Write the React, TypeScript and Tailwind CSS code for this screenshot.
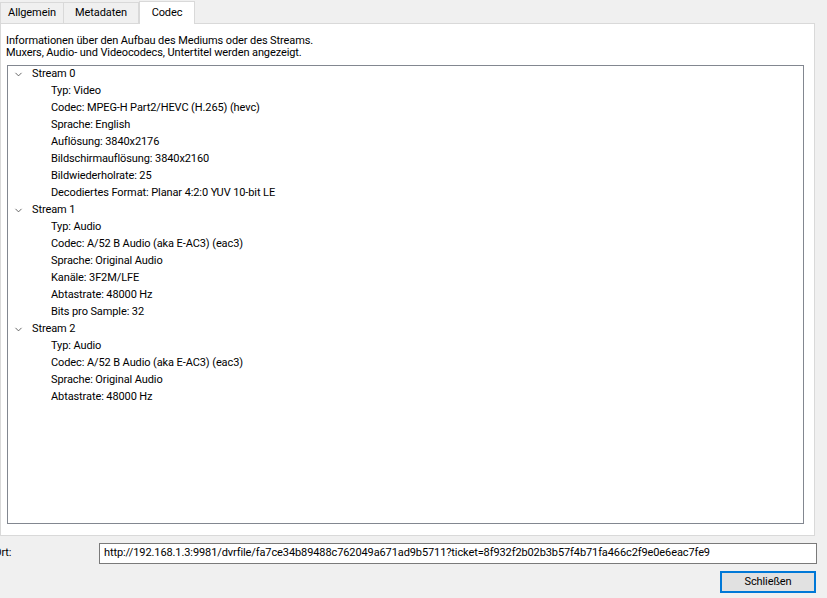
import { ChevronDown } from "lucide-react";

const streams = [
  {
    name: "Stream 0",
    items: [
      "Typ: Video",
      "Codec: MPEG-H Part2/HEVC (H.265) (hevc)",
      "Sprache: English",
      "Auflösung: 3840x2176",
      "Bildschirmauflösung: 3840x2160",
      "Bildwiederholrate: 25",
      "Decodiertes Format: Planar 4:2:0 YUV 10-bit LE",
    ],
  },
  {
    name: "Stream 1",
    items: [
      "Typ: Audio",
      "Codec: A/52 B Audio (aka E-AC3) (eac3)",
      "Sprache: Original Audio",
      "Kanäle: 3F2M/LFE",
      "Abtastrate: 48000 Hz",
      "Bits pro Sample: 32",
    ],
  },
  {
    name: "Stream 2",
    items: [
      "Typ: Audio",
      "Codec: A/52 B Audio (aka E-AC3) (eac3)",
      "Sprache: Original Audio",
      "Abtastrate: 48000 Hz",
    ],
  },
];

const font = { fontFamily: 'Roboto, "Noto Sans", sans-serif' };

export default function App() {
  return (
    <div
      className="w-[827px] h-[598px] bg-[#f0f0f0] text-[11px] tracking-[-0.1px] text-black overflow-hidden flex flex-col"
      style={font}
    >
      {/* tabs */}
      <div className="flex items-end h-[23px] pt-[2px] relative z-10">
        <div className="h-[21px] w-[64px] border border-[#d9d9d9] border-b-0 bg-[#f0f0f0] flex items-center justify-center">
          Allgemein
        </div>
        <div className="h-[21px] w-[75px] border-t border-r border-[#d9d9d9] bg-[#f0f0f0] flex items-center justify-center">
          Metadaten
        </div>
        <div className="h-[23px] w-[56px] -mb-[1px] border border-[#d9d9d9] border-b-0 bg-white flex items-center justify-center">
          Codec
        </div>
      </div>

      {/* panel */}
      <div className="w-[815px] h-[513px] bg-white border border-[#d9d9d9] flex flex-col pt-[11px] pl-[5px] pr-[10px] pb-[11px]">
        <div className="leading-[12px]">
          <div>Informationen über den Aufbau des Mediums oder des Streams.</div>
          <div>Muxers, Audio- und Videocodecs, Untertitel werden angezeigt.</div>
        </div>
        <div className="mt-[6px] ml-[1px] flex-1 border border-[#828790] bg-white">
          {streams.map((s) => (
            <div key={s.name}>
              <div className="h-[17px] flex items-center">
                <ChevronDown className="w-[11px] h-[11px] ml-[5px] mr-[8px] text-[#444]" strokeWidth={1.75} />
                {s.name}
              </div>
              {s.items.map((it, i) => (
                <div key={i} className="h-[17px] flex items-center pl-[43px]">
                  {it}
                </div>
              ))}
            </div>
          ))}
        </div>
      </div>

      {/* bottom */}
      <div className="flex items-center mt-[7px] h-[21px]">
        <div className="w-[99px] -ml-[6px]">Ort:</div>
        <div className="w-[718px] h-[21px] ml-[6px] border border-[#7a7a7a] bg-white flex items-center px-[4px] overflow-hidden whitespace-nowrap">
          http://192.168.1.3:9981/dvrfile/fa7ce34b89488c762049a671ad9b5711?ticket=8f932f2b02b3b57f4b71fa466c2f9e0e6eac7fe9
        </div>
      </div>
      <div className="flex justify-end pr-[11px] mt-[7px]">
        <button className="w-[96px] h-[22px] border-2 border-[#0078d7] bg-[#e1e1e1] flex items-center justify-center">
          Schließen
        </button>
      </div>
    </div>
  );
}
